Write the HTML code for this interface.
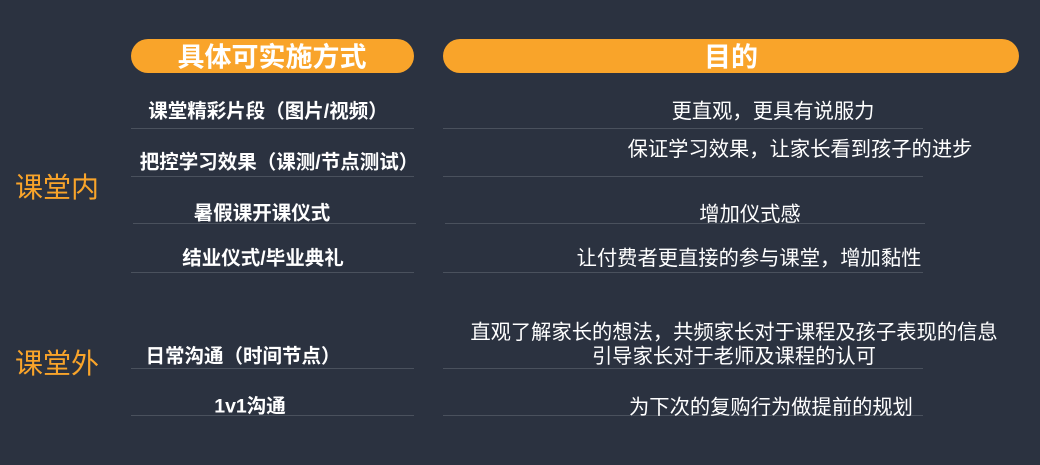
<!DOCTYPE html><html><head><meta charset="utf-8"><style>
body{margin:0;width:1040px;height:465px;background:#2b3240;overflow:hidden;font-family:"Liberation Sans","Noto Sans CJK SC",sans-serif;position:relative}
.a{position:absolute;white-space:nowrap;color:#fff;transform:translate(-50%,-50%)}
.l{font-weight:bold;font-size:19.5px}
.r{font-size:20.3px}
.pill{position:absolute;background:#f9a42a;border-radius:18px;height:34px;top:39px}
.ln{position:absolute;height:1px;background:#4a515d}
.side{position:absolute;color:#f9a42a;font-size:28px;left:15px;transform:translateY(-50%)}
</style></head><body>
<div class="pill" style="left:131px;width:283px"></div>
<div class="pill" style="left:443px;width:576px"></div>
<div class="a" style="left:272px;top:55px;font-size:27px;font-weight:bold">具体可实施方式</div>
<div class="a" style="left:731px;top:55px;font-size:27px;font-weight:bold">目的</div>
<div class="ln" style="left:131px;width:283px;top:128px"></div><div class="ln" style="left:443px;width:480px;top:128px"></div>
<div class="ln" style="left:131px;width:283px;top:176px"></div><div class="ln" style="left:443px;width:480px;top:176px"></div>
<div class="ln" style="left:133px;width:283px;top:223px"></div><div class="ln" style="left:445px;width:480px;top:223px"></div>
<div class="ln" style="left:131px;width:283px;top:272px"></div><div class="ln" style="left:443px;width:480px;top:272px"></div>
<div class="ln" style="left:131px;width:283px;top:368px"></div><div class="ln" style="left:443px;width:480px;top:368px"></div>
<div class="ln" style="left:131px;width:283px;top:415px"></div><div class="ln" style="left:443px;width:480px;top:415px"></div>
<div class="side" style="top:186px">课堂内</div>
<div class="side" style="top:362px">课堂外</div>
<div class="a l" style="left:268px;top:109px">课堂精彩片段（图片/视频）</div>
<div class="a l" style="left:279px;top:160px">把控学习效果（课测/节点测试）</div>
<div class="a l" style="left:262px;top:211px">暑假课开课仪式</div>
<div class="a l" style="left:263px;top:256px">结业仪式/毕业典礼</div>
<div class="a l" style="left:243px;top:354px">日常沟通（时间节点）</div>
<div class="a l" style="left:250px;top:404px">1v1沟通</div>
<div class="a r" style="left:773px;top:109px">更直观，更具有说服力</div>
<div class="a r" style="left:800px;top:147px">保证学习效果，让家长看到孩子的进步</div>
<div class="a r" style="left:750px;top:212px">增加仪式感</div>
<div class="a r" style="left:749px;top:256px">让付费者更直接的参与课堂，增加黏性</div>
<div class="a r" style="left:734px;top:330px">直观了解家长的想法，共频家长对于课程及孩子表现的信息</div>
<div class="a r" style="left:734px;top:354px">引导家长对于老师及课程的认可</div>
<div class="a r" style="left:771px;top:405px">为下次的复购行为做提前的规划</div>
</body></html>
